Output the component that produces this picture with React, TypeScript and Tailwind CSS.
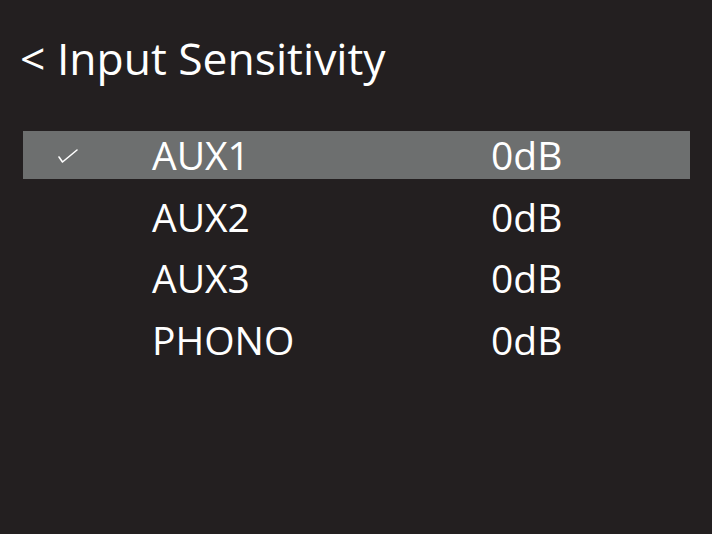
import React from "react";

const rows = [
  { name: "AUX1", value: "0dB", selected: true },
  { name: "AUX2", value: "0dB" },
  { name: "AUX3", value: "0dB" },
  { name: "PHONO", value: "0dB" },
];

export default function App() {
  return (
    <div
      className="w-[712px] h-[534px] bg-[#231f20] text-white overflow-hidden"
      style={{ fontFamily: '"Open Sans", sans-serif' }}
    >
      <div className="pl-[20px] pt-[30px] h-[131px] text-[44.4px] leading-[56px]">
        &lt; Input Sensitivity
      </div>
      <div className="flex flex-col gap-[13.5px] pl-[23px] pr-[22px]">
        {rows.map((r) => (
          <div
            key={r.name}
            className={`flex items-center h-[48px] text-[39px] leading-[48px] ${r.selected ? "bg-[#6d6f6f]" : ""}`}
          >
            <div className="w-[129px] pl-[34px] flex items-center">
              {r.selected && (
                <svg width="22" height="18" viewBox="0 0 22 18">
                  <path d="M2 11 L5.5 16 L20 4" fill="none" stroke="white" strokeWidth="1.6" strokeLinecap="round" strokeLinejoin="round" />
                </svg>
              )}
            </div>
            <div className="w-[339px]">{r.name}</div>
            <div>{r.value}</div>
          </div>
        ))}
      </div>
    </div>
  );
}
